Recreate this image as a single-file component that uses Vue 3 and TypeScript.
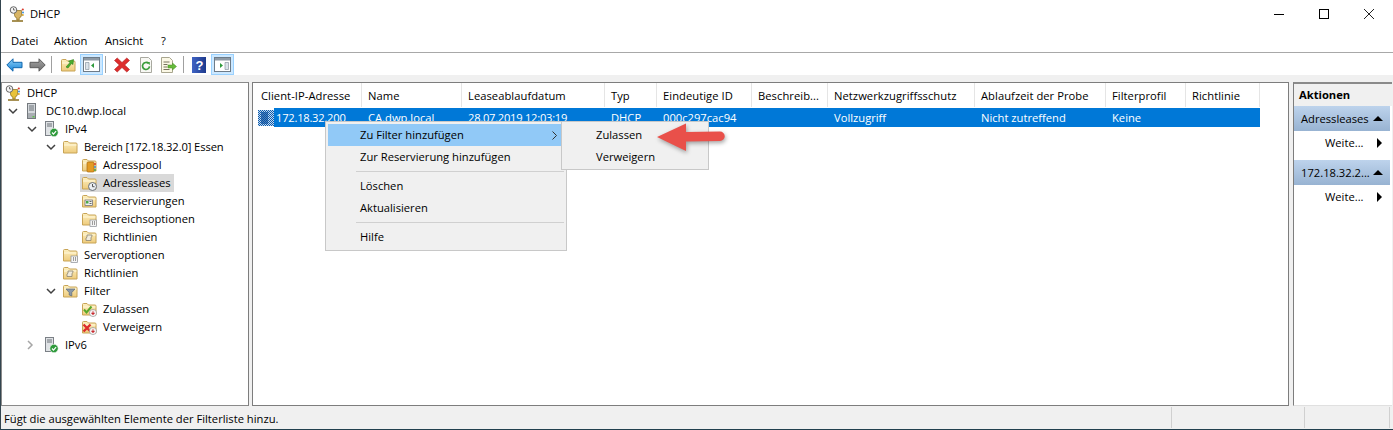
<script setup lang="ts">
interface Node { label: string; level: number; icon: string; open?: boolean; closed?: boolean; sel?: boolean; tight?: boolean }
const nodes: Node[] = [
  { label: 'DHCP', level: 0, icon: 'trophy' },
  { label: 'DC10.dwp.local', level: 1, icon: 'server', open: true },
  { label: 'IPv4', level: 2, icon: 'ip', open: true },
  { label: 'Bereich [172.18.32.0] Essen', level: 3, icon: 'folder', open: true, tight: true },
  { label: 'Adresspool', level: 4, icon: 'pool' },
  { label: 'Adressleases', level: 4, icon: 'lease', sel: true },
  { label: 'Reservierungen', level: 4, icon: 'resv' },
  { label: 'Bereichsoptionen', level: 4, icon: 'opts' },
  { label: 'Richtlinien', level: 4, icon: 'policy' },
  { label: 'Serveroptionen', level: 3, icon: 'opts' },
  { label: 'Richtlinien', level: 3, icon: 'policy' },
  { label: 'Filter', level: 3, icon: 'filter', open: true },
  { label: 'Zulassen', level: 4, icon: 'allow' },
  { label: 'Verweigern', level: 4, icon: 'deny' },
  { label: 'IPv6', level: 2, icon: 'ip', closed: true },
]
const indent = (n: Node) => ({ paddingLeft: (n.level === 0 ? 3 : 19 * n.level - 16) + 'px' })

const columns = [
  { t: 'Client-IP-Adresse', w: 107 }, { t: 'Name', w: 100 }, { t: 'Leaseablaufdatum', w: 143 },
  { t: 'Typ', w: 52 }, { t: 'Eindeutige ID', w: 95 }, { t: 'Beschreib...', w: 76 },
  { t: 'Netzwerkzugriffsschutz', w: 147 }, { t: 'Ablaufzeit der Probe', w: 131 },
  { t: 'Filterprofil', w: 80 }, { t: 'Richtlinie', w: 74 },
]
const cells = [
  { t: 'CA.dwp.local', w: 100 }, { t: '28.07.2019 12:03:19', w: 143, num: true }, { t: 'DHCP', w: 52 },
  { t: '000c297cac94', w: 95 }, { t: '', w: 76 }, { t: 'Vollzugriff', w: 147 },
  { t: 'Nicht zutreffend', w: 131 }, { t: 'Keine', w: 80 }, { t: '', w: 75 },
]
const widthOf = (w: number) => ({ width: w + 'px' })
</script>

<template>
  <div class="win">
    <svg class="defs" width="0" height="0">
      <defs>
        <linearGradient id="fg" x1="0" y1="0" x2="0" y2="1">
          <stop offset="0" stop-color="#fdf0c0" /><stop offset="1" stop-color="#eecb7c" />
        </linearGradient>
        <linearGradient id="blueArrow" x1="0" y1="0" x2="0" y2="1">
          <stop offset="0" stop-color="#8fd0f7" /><stop offset="1" stop-color="#1583d8" />
        </linearGradient>
        <linearGradient id="grayArrow" x1="0" y1="0" x2="0" y2="1">
          <stop offset="0" stop-color="#a5a5a5" /><stop offset="1" stop-color="#6e6e6e" />
        </linearGradient>
        <linearGradient id="helpBlue" x1="0" y1="0" x2="1" y2="0">
          <stop offset="0" stop-color="#3f63c4" /><stop offset="1" stop-color="#1e3a8c" />
        </linearGradient>
        <pattern id="dither" width="2" height="2" patternUnits="userSpaceOnUse">
          <rect width="2" height="2" fill="#c4d8ee" />
          <rect width="1" height="1" fill="#0a5cb0" /><rect x="1" y="1" width="1" height="1" fill="#0a5cb0" />
        </pattern>
        <symbol id="fld" viewBox="0 0 16 16">
          <path d="M1.500 14V3.500a1 1 0 0 1 1-1h3.500l1.500 1.500h6.500a1 1 0 0 1 1 1v9z" fill="url(#fg)" stroke="#c8a456" />
          <path d="M2 6h12.500" stroke="#fff8dc" />
        </symbol>
        <symbol id="trophyS" viewBox="0 0 16 16">
          <path d="M5.500 4.500h7v4.500a3 3 0 0 1-2.300 2.900V14H7.800v-2.100A3 3 0 0 1 5.500 9z" fill="currentColor" stroke="#8a6d1c" stroke-width=".7" />
          <circle cx="4.500" cy="4" r="3.300" fill="#f4f4f4" stroke="#666" />
          <path d="M4.500 2v2h1.700" fill="none" stroke="#555" stroke-width=".8" />
          <path d="M3 15h11" stroke="#8a6d1c" stroke-width="1.500" />
          <circle cx="13.800" cy="3.500" r="1.100" fill="#d8392b" /><circle cx="14" cy="6.500" r="1" fill="#3c8fd8" /><circle cx="13.800" cy="9" r="1" fill="#d8a52b" />
        </symbol>
      </defs>
    </svg>

    <header class="title">
      <svg class="ti trophy-tan" width="16" height="16"><use href="#trophyS" /></svg>
      <span class="title-text">DHCP</span>
      <div class="wbtns">
        <svg width="12" height="12" viewBox="0 0 12 12"><path d="M1 6.500h10" stroke="#000" /></svg>
        <svg width="12" height="12" viewBox="0 0 12 12"><rect x="1.500" y="1.500" width="9" height="9" fill="none" stroke="#000" /></svg>
        <svg width="12" height="12" viewBox="0 0 12 12"><path d="M1 1l10 10M11 1L1 11" stroke="#222" fill="none" /></svg>
      </div>
    </header>

    <nav class="menubar">
      <span class="m1">Datei</span>
      <span class="m2">Aktion</span>
      <span class="m3">Ansicht</span>
      <span>?</span>
    </nav>

    <div class="toolbar">
      <span class="tb w23">
        <svg width="17" height="14" viewBox="0 0 17 14"><path d="M7 .8L.8 7 7 13.200V9.700h9V4.300H7z" fill="url(#blueArrow)" stroke="#1167ae" /></svg>
      </span>
      <span class="tb w23">
        <svg width="17" height="14" viewBox="0 0 17 14"><path d="M10 .8L16.200 7 10 13.200V9.700H1V4.300h9z" fill="url(#grayArrow)" stroke="#5c5c5c" /></svg>
      </span>
      <i class="tsep s-a" />
      <span class="tb w25">
        <svg width="16" height="16" viewBox="0 0 16 16"><use href="#fld" /><path d="M6 10L10 5.500 8.500 4.200 13.500 2.500 13 7.500 11.500 6.500 8 11z" fill="#4bae2e" stroke="#2f7d1c" stroke-width=".6" /></svg>
      </span>
      <span class="tb on w23">
        <svg width="17" height="15" viewBox="0 0 17 15"><rect x=".5" y=".5" width="16" height="14" fill="#fff" stroke="#6d7b88" /><rect x="1" y="1" width="15" height="2.500" fill="#8e9aa6" /><path d="M2.500 5.500h3.500v7H2.500z" fill="#dbe3ea" stroke="#7b8894" stroke-width=".6" /><path d="M11 6v5L8 8.500z" fill="#2f9a3c" /></svg>
      </span>
      <i class="tsep s-b" />
      <span class="tb w23">
        <svg width="16" height="16" viewBox="0 0 16 16"><path d="M3.200 1L8 5.500 12.800 1 15.500 3.500 10.700 8 15.500 12.500 12.800 15 8 10.500 3.200 15 .5 12.500 5.300 8 .5 3.500z" fill="#dd2c2c" stroke="#b01e1e" stroke-width=".6" /></svg>
      </span>
      <span class="tb w25">
        <svg width="14" height="16" viewBox="0 0 14 16"><path d="M1.500.5h8l3 3v12h-11z" fill="#f8f8f4" stroke="#a9a9a0" /><path d="M10.500 9.300a3.500 3.500 0 1 1-1-2.800" fill="none" stroke="#3a9c3a" stroke-width="1.700" /><path d="M8 4.800l3 .4-.5 3z" fill="#3a9c3a" /></svg>
      </span>
      <span class="tb w20">
        <svg width="17" height="16" viewBox="0 0 17 16"><path d="M1.500.5h8l3 3v12h-11z" fill="#fbf8e6" stroke="#a9a68f" /><path d="M3.500 5h6M3.500 7.500h4M3.500 10h4M3.500 12.500h6" stroke="#77725c" /><path d="M8 8h4.500V6L16.500 9.500 12.500 13v-2H8z" fill="#66bb3a" stroke="#468f20" stroke-width=".5" /></svg>
      </span>
      <i class="tsep s-c" />
      <span class="tb w25">
        <svg width="14" height="16" viewBox="0 0 14 16"><rect width="14" height="16" fill="url(#helpBlue)" /><text x="7.500" y="13" text-anchor="middle" font-size="13" font-weight="700" fill="#fff" font-family="Liberation Sans, sans-serif">?</text></svg>
      </span>
      <span class="tb on w23">
        <svg width="17" height="15" viewBox="0 0 17 15"><rect x=".5" y=".5" width="16" height="14" fill="#fff" stroke="#6d7b88" /><rect x="1" y="1" width="15" height="2.500" fill="#8e9aa6" /><path d="M11 5.500h3.500v7H11z" fill="#dbe3ea" stroke="#7b8894" stroke-width=".6" /><path d="M6 6v5l3-2.500z" fill="#2f9a3c" /></svg>
      </span>
    </div>

    <main class="panes">
      <aside class="tree">
        <div v-for="(n, i) in nodes" :key="i" class="row" :style="indent(n)">
          <span v-if="n.level > 0" class="chev">
            <svg v-if="n.open" width="10" height="7" viewBox="0 0 10 7"><path d="M1 1l4 4 4-4" fill="none" stroke="#404040" stroke-width="1.500" /></svg>
            <svg v-else-if="n.closed" width="7" height="10" viewBox="0 0 7 10"><path d="M1 1l4 4-4 4" fill="none" stroke="#a6a6a6" stroke-width="1.500" /></svg>
          </span>
          <span class="node" :class="{ sel: n.sel }">
            <svg class="ni" width="16" height="16" viewBox="0 0 16 16">
              <use v-if="n.icon === 'trophy'" class="trophy-gold" href="#trophyS" width="16" height="16" />
              <g v-else-if="n.icon === 'server'">
                <rect x="3.500" y=".5" width="8" height="15" fill="#d5d9dd" stroke="#74797e" />
                <path d="M5 3h5M5 5h5M5 7h5" stroke="#6b7177" />
                <rect x="4" y="10" width="7" height="5" fill="#a9aeb3" /><rect x="8.500" y="13" width="2" height="1.500" fill="#5fc04a" />
              </g>
              <g v-else-if="n.icon === 'ip'">
                <rect x="2.500" y=".5" width="8" height="14" fill="#dfe2e5" stroke="#7b8086" />
                <path d="M4 3h5M4 5h5" stroke="#6b7177" />
                <circle cx="11" cy="11.500" r="4.200" fill="#2f9a3c" stroke="#fff" stroke-width=".6" />
                <path d="M9 11.500l1.500 1.600 2.600-3" fill="none" stroke="#fff" stroke-width="1.200" />
              </g>
              <g v-else>
                <use href="#fld" width="16" height="16" />
                <g v-if="n.icon === 'pool'">
                  <rect x="6" y="5" width="7" height="10" rx="1" fill="#e39b24" stroke="#a96c10" stroke-width=".7" />
                  <circle cx="14" cy="7" r="1" fill="#d8392b" /><circle cx="14" cy="10" r="1" fill="#3c8fd8" /><circle cx="14" cy="13" r="1" fill="#48a848" />
                </g>
                <g v-else-if="n.icon === 'lease'">
                  <circle cx="11.500" cy="11.500" r="4" fill="#e9edf1" stroke="#6a7178" />
                  <path d="M11.500 9v2.700h2" fill="none" stroke="#444" stroke-width=".9" />
                </g>
                <g v-else-if="n.icon === 'resv'">
                  <rect x="4" y="7" width="7.500" height="5.500" fill="#eef2ee" stroke="#667" stroke-width=".7" />
                  <rect x="5" y="8" width="2.500" height="2.500" fill="#48a848" /><path d="M8.500 8.500h2M8.500 10.500h2" stroke="#444" stroke-width=".8" />
                </g>
                <g v-else-if="n.icon === 'opts'">
                  <rect x="9" y="9" width="6.500" height="6.500" fill="#f4f4f4" stroke="#8a8f96" stroke-width=".7" />
                  <path d="M11 11h1M13 11h1M11 13h1M13 13h1" stroke="#444" />
                </g>
                <path v-else-if="n.icon === 'policy'" d="M6 6h5v1.500l-1 .8v3.200H5V9l1-.8z" fill="#f0ebdc" stroke="#8c8470" stroke-width=".8" />
                <path v-else-if="n.icon === 'filter'" d="M4 6h9L9.800 9.500V13l-2.600-1V9.500z" fill="#8b98a6" stroke="#5e6a76" stroke-width=".7" />
                <g v-else-if="n.icon === 'allow'">
                  <path d="M3 8.500l2.500 3 5-6" fill="none" stroke="#58a82a" stroke-width="2" />
                  <circle cx="12" cy="12" r="3.600" fill="#f5f5f5" stroke="#8a8a8a" stroke-width=".6" /><path d="M12 9.800v3M10.500 12l1.500 1.800 1.500-1.800z" stroke="#c9262c" fill="#c9262c" stroke-width=".7" />
                </g>
                <g v-else-if="n.icon === 'deny'">
                  <path d="M2.500 5.500l7 7M9.500 5.500l-7 7" fill="none" stroke="#dd2c2c" stroke-width="2.400" />
                  <circle cx="12" cy="12" r="3.600" fill="#f5f5f5" stroke="#8a8a8a" stroke-width=".6" /><path d="M12 9.800v3M10.500 12l1.500 1.800 1.500-1.800z" stroke="#c9262c" fill="#c9262c" stroke-width=".7" />
                </g>
              </g>
            </svg>
            <span class="lbl" :class="{ tight: n.tight }">{{ n.label }}</span>
          </span>
        </div>
      </aside>

      <section class="list">
        <div class="thead">
          <span v-for="c in columns" :key="c.t" class="th" :style="widthOf(c.w)">{{ c.t }}</span>
        </div>
        <div class="lrow">
          <svg class="hosticon" width="16" height="16" viewBox="0 0 16 16">
            <rect width="16" height="16" fill="url(#dither)" />
            <rect x="3" y="2" width="7" height="12" fill="#0b4f9c" opacity=".65" />
          </svg>
          <div class="selrow">
            <span class="td first">172.18.32.200</span>
            <span v-for="(c, i) in cells" :key="i" class="td" :class="{ num: c.num }" :style="widthOf(c.w)">{{ c.t }}</span>
          </div>
        </div>

        <div class="ctx">
          <div class="mi hot">Zu Filter hinzufügen<svg class="more" width="5" height="9" viewBox="0 0 5 9"><path d="M.5.5l4 4-4 4" fill="none" stroke="#333" /></svg></div>
          <div class="mi">Zur Reservierung hinzufügen</div>
          <hr class="msep" />
          <div class="mi">Löschen</div>
          <div class="mi">Aktualisieren</div>
          <hr class="msep" />
          <div class="mi">Hilfe</div>
        </div>
        <div class="sub">
          <div class="si">Zulassen</div>
          <div class="si">Verweigern</div>
        </div>
        <svg class="callout" width="72" height="34" viewBox="0 0 72 34">
          <path d="M1 15L30 1.500 30 10 64 9.500a4.500 4.500 0 0 1 0 9.500L30 19.500 30 29z" fill="#e9504a" />
        </svg>
      </section>

      <aside class="actions">
        <div class="ahead">Aktionen</div>
        <div class="agroup">
          <span class="gt">Adressleases</span><i class="up" />
        </div>
        <div class="aitem"><span>Weite...</span><i class="rt" /></div>
        <div class="agroup second">
          <span class="gt">172.18.32.2...</span><i class="up" />
        </div>
        <div class="aitem"><span>Weite...</span><i class="rt" /></div>
      </aside>
    </main>

    <footer class="status">
      <span class="s1">Fügt die ausgewählten Elemente der Filterliste hinzu.</span>
      <span class="s2" />
      <span class="s3" />
    </footer>
  </div>
</template>

<style scoped>
.defs { position: absolute; }
.win {
  width: 1393px; height: 430px; box-sizing: border-box;
  display: flex; flex-direction: column; overflow: hidden;
  background: #f0f0f0; color: #000;
  border-left: 1px solid #33454f; border-bottom: 1px solid #22404e;
  font: 11.2px/16px "Open Sans", Roboto, sans-serif;
}
.trophy-tan { color: #d8b566; }
.trophy-gold { color: #e8c33a; }
.title { height: 30px; background: #fff; display: flex; align-items: center; padding-left: 8px; flex: none; }
.ti { margin-right: 5px; margin-top: -2px; }
.title-text { margin-top: -2px; }
.wbtns { margin-left: auto; display: flex; gap: 33px; padding-right: 18px; margin-top: -3px; }
.menubar { height: 22px; background: #fff; display: flex; align-items: center; padding-left: 10px; flex: none; border-bottom: 1px solid #a8a8a8; }
.m1 { width: 43px; }
.m2 { width: 51px; }
.m3 { width: 56px; }
.toolbar { height: 22px; background: #fff; display: flex; align-items: flex-end; padding-left: 2px; flex: none; }
.tb { height: 21px; display: flex; align-items: center; justify-content: center; box-sizing: border-box; flex: none; }
.w20 { width: 20px; }
.w23 { width: 23px; }
.w25 { width: 25px; }
.tb.on { background: #cce8ff; border: 1px solid #99d1ff; }
.tsep { width: 1px; height: 17px; background: #a0a0a0; flex: none; margin-bottom: 2px; }
.s-a { margin-left: 2px; margin-right: 3px; }
.s-b { margin-left: 2px; margin-right: 4px; }
.s-c { margin-left: 5px; margin-right: 2px; }
.panes { flex: 1; display: flex; padding-top: 7px; min-height: 0; }
.tree { width: 248px; box-sizing: border-box; background: #fff; border: 1px solid #8a8a8a; border-right-color: #7d7d7d; padding-top: 1px; flex: none; }
.row { height: 18px; display: flex; align-items: center; }
.chev { width: 19px; flex: none; display: flex; justify-content: flex-start; padding-left: 3px; box-sizing: border-box; align-items: center; }
.node { display: flex; align-items: center; height: 18px; padding-right: 3px; white-space: nowrap; }
.node.sel { background: #d9d9d9; margin-left: -1px; padding-left: 1px; }
.ni { flex: none; margin-right: 6px; }
.lbl.tight { letter-spacing: -.11px; }
.list { margin-left: 3px; width: 1037px; box-sizing: border-box; position: relative; background: #fff; border: 1px solid #7d7d7d; flex: none; padding-left: 2px; }
.thead { display: flex; height: 24px; }
.th { box-sizing: border-box; padding: 2px 0 0 6px; border-right: 1px solid #e5e5e5; line-height: 22px; white-space: nowrap; flex: none; overflow: hidden; letter-spacing: .05px; }
.lrow { display: flex; height: 19px; align-items: center; padding-left: 3px; margin-top: 1px; }
.hosticon { flex: none; }
.selrow { display: flex; background: #0078d7; color: #fff; height: 19px; align-items: center; }
.td { box-sizing: border-box; padding-left: 7px; white-space: nowrap; flex: none; }
.td.first { width: 87px; padding-left: 2px; letter-spacing: -.25px; }
.td.num { letter-spacing: -.27px; }
.ctx { position: absolute; left: 72px; top: 38px; width: 242px; height: 130px; box-sizing: border-box; background: #f0f0f0; border: 1px solid #c8c8c8; padding: 2px; z-index: 2; }
.mi { height: 22px; line-height: 22px; padding-left: 32px; position: relative; }
.mi.hot { background: #91c9f7; }
.more { position: absolute; right: 7px; top: 7px; }
.msep { border: 0; height: 1px; background: #d0d0d0; margin: 3px 0 3px 28px; }
.sub { position: absolute; left: 308px; top: 38px; width: 148px; height: 49px; box-sizing: border-box; background: #f0f0f0; border: 1px solid #c8c8c8; padding: 2px; z-index: 3; }
.si { height: 22px; line-height: 22px; padding-left: 32px; }
.callout { position: absolute; left: 403px; top: 39px; z-index: 4; filter: drop-shadow(1px 2px 2px rgba(0,0,0,.35)); }
.actions { margin-left: 4px; width: 99px; box-sizing: border-box; background: #fff; border-left: 1px solid #7d7d7d; border-top: 2px solid #8a8a8a; border-bottom: 1px solid #e0e0e0; flex: none; }
.ahead { height: 22px; line-height: 22px; background: #f0f0f0; font-weight: 700; padding-left: 5px; }
.agroup { height: 25px; width: 96px; box-sizing: border-box; background: linear-gradient(#bdd3ec, #98b3d2); display: flex; align-items: center; padding-left: 7px; position: relative; }
.gt { white-space: nowrap; }
.agroup.second { margin-top: 5px; }
.up { position: absolute; right: 7px; top: 10px; width: 0; height: 0; border: 5px solid transparent; border-top: 0; border-bottom: 5px solid #000; }
.aitem { height: 24px; display: flex; align-items: center; padding-left: 31px; position: relative; }
.rt { position: absolute; left: 83px; top: 7px; width: 0; height: 0; border: 5px solid transparent; border-right: 0; border-left: 5px solid #000; }
.status { height: 23px; flex: none; display: flex; background: #f0f0f0; padding-top: 1px; box-sizing: border-box; }
.status span { display: block; box-sizing: border-box; border-right: 1px solid #d0d0d0; line-height: 24px; height: 21px; white-space: nowrap; }
.s1 { width: 1171px; padding-left: 3px; }
.s2 { width: 133px; }
.s3 { width: 85px; }
</style>
